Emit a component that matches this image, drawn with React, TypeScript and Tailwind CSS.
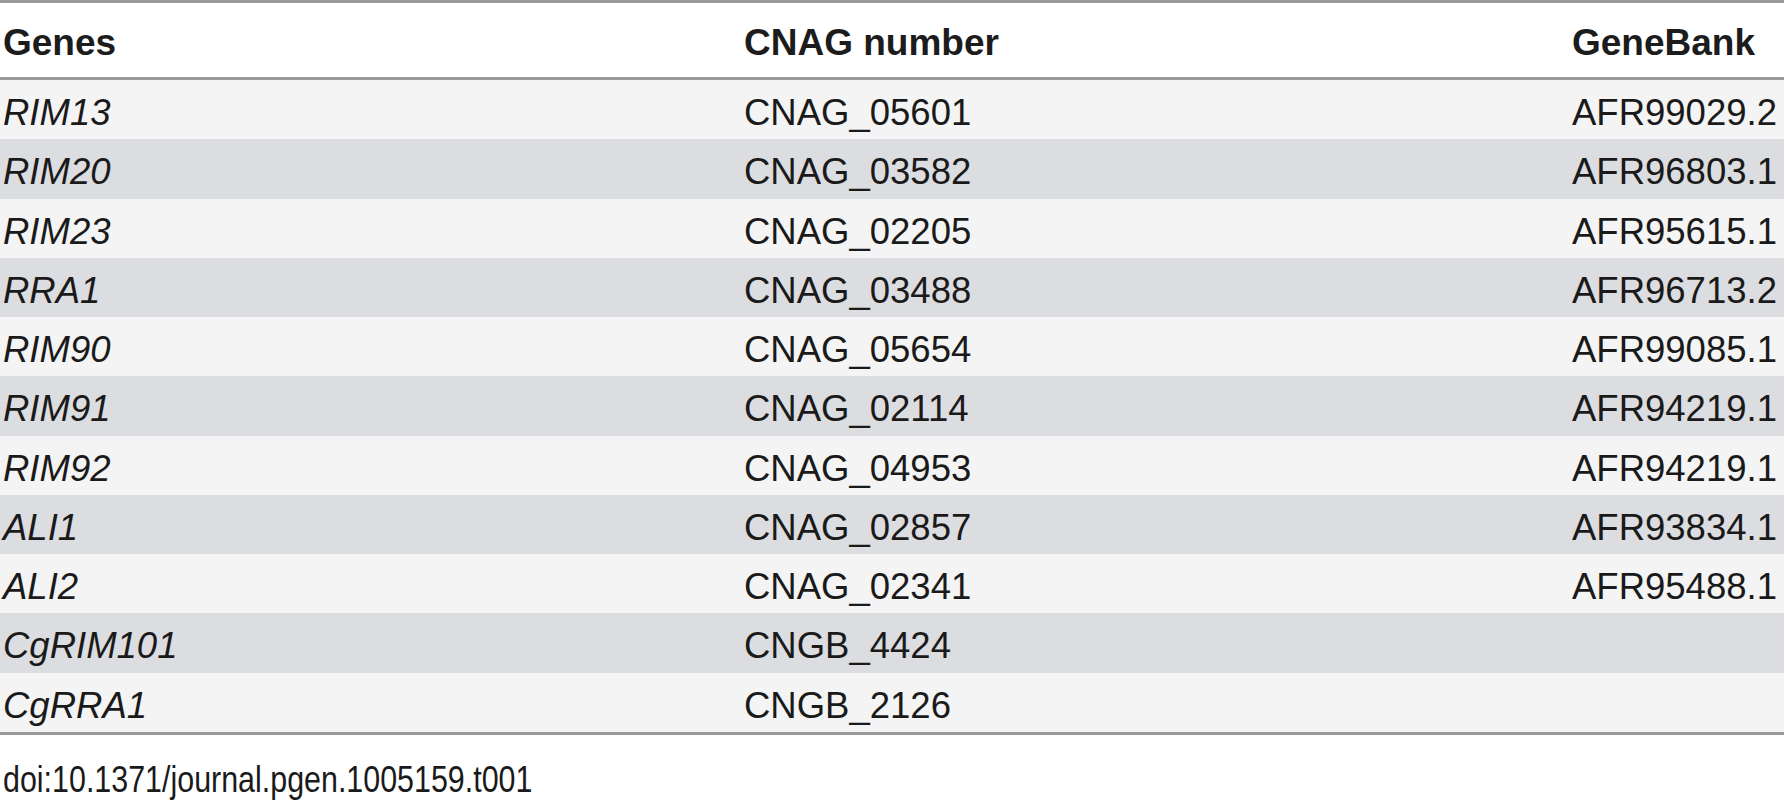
const rows = [
  { gene: "RIM13", cnag: "CNAG_05601", bank: "AFR99029.2" },
  { gene: "RIM20", cnag: "CNAG_03582", bank: "AFR96803.1" },
  { gene: "RIM23", cnag: "CNAG_02205", bank: "AFR95615.1" },
  { gene: "RRA1", cnag: "CNAG_03488", bank: "AFR96713.2" },
  { gene: "RIM90", cnag: "CNAG_05654", bank: "AFR99085.1" },
  { gene: "RIM91", cnag: "CNAG_02114", bank: "AFR94219.1" },
  { gene: "RIM92", cnag: "CNAG_04953", bank: "AFR94219.1" },
  { gene: "ALI1", cnag: "CNAG_02857", bank: "AFR93834.1" },
  { gene: "ALI2", cnag: "CNAG_02341", bank: "AFR95488.1" },
  { gene: "CgRIM101", cnag: "CNGB_4424", bank: "" },
  { gene: "CgRRA1", cnag: "CNGB_2126", bank: "" },
];

export default function App() {
  return (
    <div className="h-[800px] w-[1785px] overflow-hidden bg-white font-['Liberation_Sans',Arial,sans-serif] text-[#1a1a1a]">
      <div className="w-[1784px]">
        {/* Header */}
        <div className="grid h-[80px] grid-cols-[744px_828px_1fr] border-y-[3px] border-[#9a9a9a] pt-[19px] text-[37px] font-bold leading-[41px] text-[#1c1c1c]">
          <div className="pl-[3px]">Genes</div>
          <div>CNAG number</div>
          <div>GeneBank</div>
        </div>

        {/* Rows */}
        {rows.map((r, i) => (
          <div
            key={r.gene}
            className={
              "grid h-[59.27px] grid-cols-[744px_828px_1fr] pt-[7px] text-[36.5px] leading-[52px] " +
              (i % 2 === 0 ? "bg-[#f4f4f4]" : "bg-[#dcdde0]")
            }
          >
            <div className="pl-[3px] italic">{r.gene}</div>
            <div>{r.cnag}</div>
            <div>{r.bank}</div>
          </div>
        ))}

        <div className="h-[3px] bg-[#9a9a9a]" />
      </div>

      {/* doi, narrow face in the original */}
      <div className="mt-[27px] pl-[3px] text-[36px] leading-[36px] text-[#1a1a1a]">
        <span className="inline-block origin-left scale-x-[0.845] whitespace-nowrap">
          doi:10.1371/journal.pgen.1005159.t001
        </span>
      </div>
    </div>
  );
}
